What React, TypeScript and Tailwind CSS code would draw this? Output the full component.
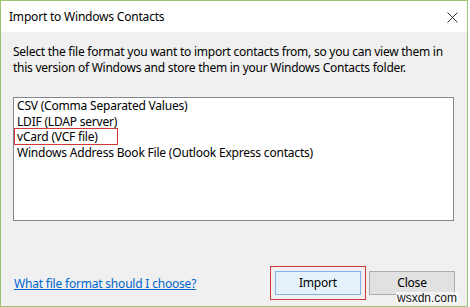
import React from "react";

export default function App() {
  const font = { fontFamily: '"Noto Sans", "Open Sans", sans-serif' };
  return (
    <div className="w-[470px] h-[307px] bg-white overflow-hidden" style={font}>
      <div className="w-[468px] h-[307px] border border-[#9cc573] flex flex-col bg-[#f0f0f0] text-[12px] text-black">
        <div className="h-[31px] bg-white flex items-center justify-between pl-[8px] pr-[9px] shrink-0">
          <span className="text-[12px] tracking-[-0.2px]">Import to Windows Contacts</span>
          <svg width="11" height="11" viewBox="0 0 11 11" className="mt-[1px]">
            <path d="M0.5 0.5 L10.5 10.5 M10.5 0.5 L0.5 10.5" stroke="#333" strokeWidth="1" fill="none" />
          </svg>
        </div>
        <div className="flex flex-col flex-1 pl-[12px] pr-[13px]">
          <p className="mt-[12px] leading-[16px] tracking-[-0.25px] text-[12px]">
            Select the file format you want to import contacts from, so you can view them in
            <br />
            this version of Windows and store them in your Windows Contacts folder.
          </p>
          <div className="mt-[21px] h-[124px] bg-white border border-[#828790] tracking-[-0.2px] leading-[15.5px]">
            <div className="pl-[3px]">CSV (Comma Separated Values)</div>
            <div className="pl-[3px]">LDIF (LDAP server)</div>
            <div className="pl-[3px] relative">
              vCard (VCF file)
              <span className="absolute left-0 -top-[1px] w-[104px] h-[17px] border border-[#d0383a]" />
            </div>
            <div className="pl-[3px]">Windows Address Book File (Outlook Express contacts)</div>
          </div>
          <div className="flex-1" />
          <div className="flex items-center justify-between mb-[6px] relative">
            <a className="text-[#0066cc] underline tracking-[-0.2px] ml-[1px] mt-[2px]">What file format should I choose?</a>
            <div className="flex items-center gap-[3px]">
              <div className="border border-[#d0383a] p-[4px]">
                <button className="w-[86px] h-[24px] bg-[#e5f1fb] border border-[#7eb4ea] flex items-center justify-center tracking-[-0.2px]">Import</button>
              </div>
              <button className="w-[86px] h-[24px] bg-[#e1e1e1] border border-[#adadad] flex items-center justify-center tracking-[-0.2px] -mr-[1px]">Close</button>
            </div>
            <span className="absolute right-[-4px] bottom-[-4px] text-[12px] leading-[12px] text-[#111] bg-white/70 px-[1px]" style={{ fontFamily: '"Liberation Sans", sans-serif' }}>wsxdn.com</span>
          </div>
        </div>
      </div>
    </div>
  );
}
